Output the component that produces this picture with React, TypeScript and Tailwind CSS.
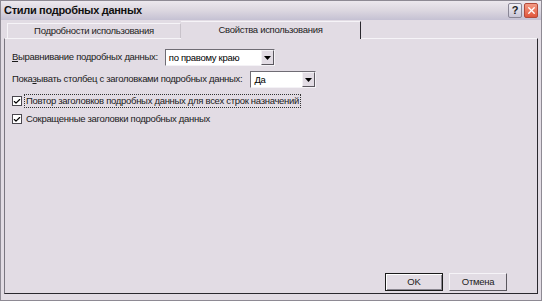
import { Check, X } from 'lucide-react'

function Combo({ value, width }: { value: string; width: string }) {
  return (
    <div className={`flex h-[17px] ${width} items-stretch border border-t-[#6f6c74] border-l-[#6f6c74] border-r-[#f4f2f6] border-b-[#f4f2f6] bg-white`}>
      <div className="flex flex-1 items-center pl-[3px] text-[9.5px] leading-none tracking-[-0.3px] text-black">{value}</div>
      <div className="flex w-[13px] items-center justify-center border border-t-[#f4f2f6] border-l-[#f4f2f6] border-r-[#5a575e] border-b-[#5a575e] bg-[#e2dce4]">
        <svg width="7" height="4" viewBox="0 0 7 4">
          <path d="M0 0h7L3.5 4z" fill="#000" />
        </svg>
      </div>
    </div>
  )
}

function CheckBox({ label, focused }: { label: string; focused?: boolean }) {
  return (
    <div className="flex items-center gap-[3px]">
      <div className="flex h-[10px] w-[10px] items-center justify-center border border-[#4a474e] bg-white">
        <Check size={9} strokeWidth={3.5} className="text-black" />
      </div>
      <span className={`px-[1px] text-[9.5px] leading-[12px] tracking-[-0.3px] text-[#1a1a1a] ${focused ? 'outline outline-1 outline-dotted outline-[#333]' : ''}`}>
        {label}
      </span>
    </div>
  )
}

export default function App() {
  return (
    <div
      className="flex h-[301px] w-[542px] flex-col border border-[#8e8a94] bg-[#e2dce4]"
      style={{ fontFamily: '"Liberation Sans", Arial, sans-serif' }}
    >
      {/* заголовок окна */}
      <div className="flex h-[19px] items-center justify-between bg-gradient-to-b from-[#ece8ee] via-[#dcd7e0] to-[#c5c1d3] pl-[3px] pr-[3px]">
        <span className="text-[11px] font-bold tracking-[-0.3px] text-[#101010]">Стили подробных данных</span>
        <div className="flex gap-[2px]">
          <div className="flex h-[15px] w-[14px] items-center justify-center rounded-[2px] border border-[#8a8796] bg-gradient-to-b from-[#f2f0f6] to-[#c9c6d6] text-[11px] font-bold leading-none text-[#222]">
            ?
          </div>
          <div className="flex h-[15px] w-[14px] items-center justify-center rounded-[2px] border border-[#b34a3a] bg-gradient-to-b from-[#f39a84] to-[#e0553c]">
            <X size={11} strokeWidth={3} className="text-white" />
          </div>
        </div>
      </div>

      <div className="flex flex-1 flex-col px-[3px] pb-[6px] pt-[1px]">
        {/* вкладки */}
        <div className="flex h-[17px] items-end pl-[3px]">
          <div className="flex h-[15px] w-[174px] items-center justify-center border border-b-0 border-t-[#f6f4f8] border-l-[#f6f4f8] border-r-[#c8c2ca] text-[9.5px] tracking-[-0.3px] text-[#222]">
            Подробности использования
          </div>
          <div className="relative z-10 -mb-[1px] flex h-[18px] w-[180px] items-center justify-center border-t border-r border-t-[#f6f4f8] border-r-[#2a282e] bg-[#e2dce4] text-[9.5px] tracking-[-0.3px] text-[#222]">
            Свойства использования
          </div>
        </div>

        {/* панель */}
        <div className="flex flex-1 flex-col border border-t-[#f6f4f8] border-l-[#7a7680] border-r-[#2a282e] border-b-[#2a282e] px-[7px] pb-[2px] pt-[10px]">
          <div className="flex items-center gap-[7px]">
            <span className="text-[9.5px] tracking-[-0.3px] text-[#1a1a1a]">
              <span className="underline">В</span>ыравнивание подробных данных:
            </span>
            <Combo value="по правому краю" width="w-[110px]" />
          </div>
          <div className="mt-[5px] flex items-center gap-[8px]">
            <span className="text-[9.5px] tracking-[-0.3px] text-[#1a1a1a]">
              Пока<span className="underline">з</span>ывать столбец с заголовками подробных данных:
            </span>
            <Combo value="Да" width="w-[66px]" />
          </div>
          <div className="mt-[7px] flex flex-col gap-[6px]">
            <CheckBox label="Повтор заголовков подробных данных для всех строк назначений" focused />
            <CheckBox label="Сокращенные заголовки подробных данных" />
          </div>

          <div className="mt-auto flex justify-end gap-[6px] pr-[23px]">
            <div className="flex h-[18px] w-[58px] items-center justify-center border border-[#1a1a1a] bg-[#e2dce4] text-[9.5px] text-[#222] shadow-[inset_1px_1px_0_#fff,inset_-1px_-1px_0_#8a8690]">
              OK
            </div>
            <div className="flex h-[18px] w-[58px] items-center justify-center border border-t-[#f6f4f8] border-l-[#f6f4f8] border-r-[#5a575e] border-b-[#5a575e] bg-[#e2dce4] text-[9.5px] tracking-[-0.3px] text-[#222]">
              Отмена
            </div>
          </div>
        </div>
      </div>
    </div>
  )
}
